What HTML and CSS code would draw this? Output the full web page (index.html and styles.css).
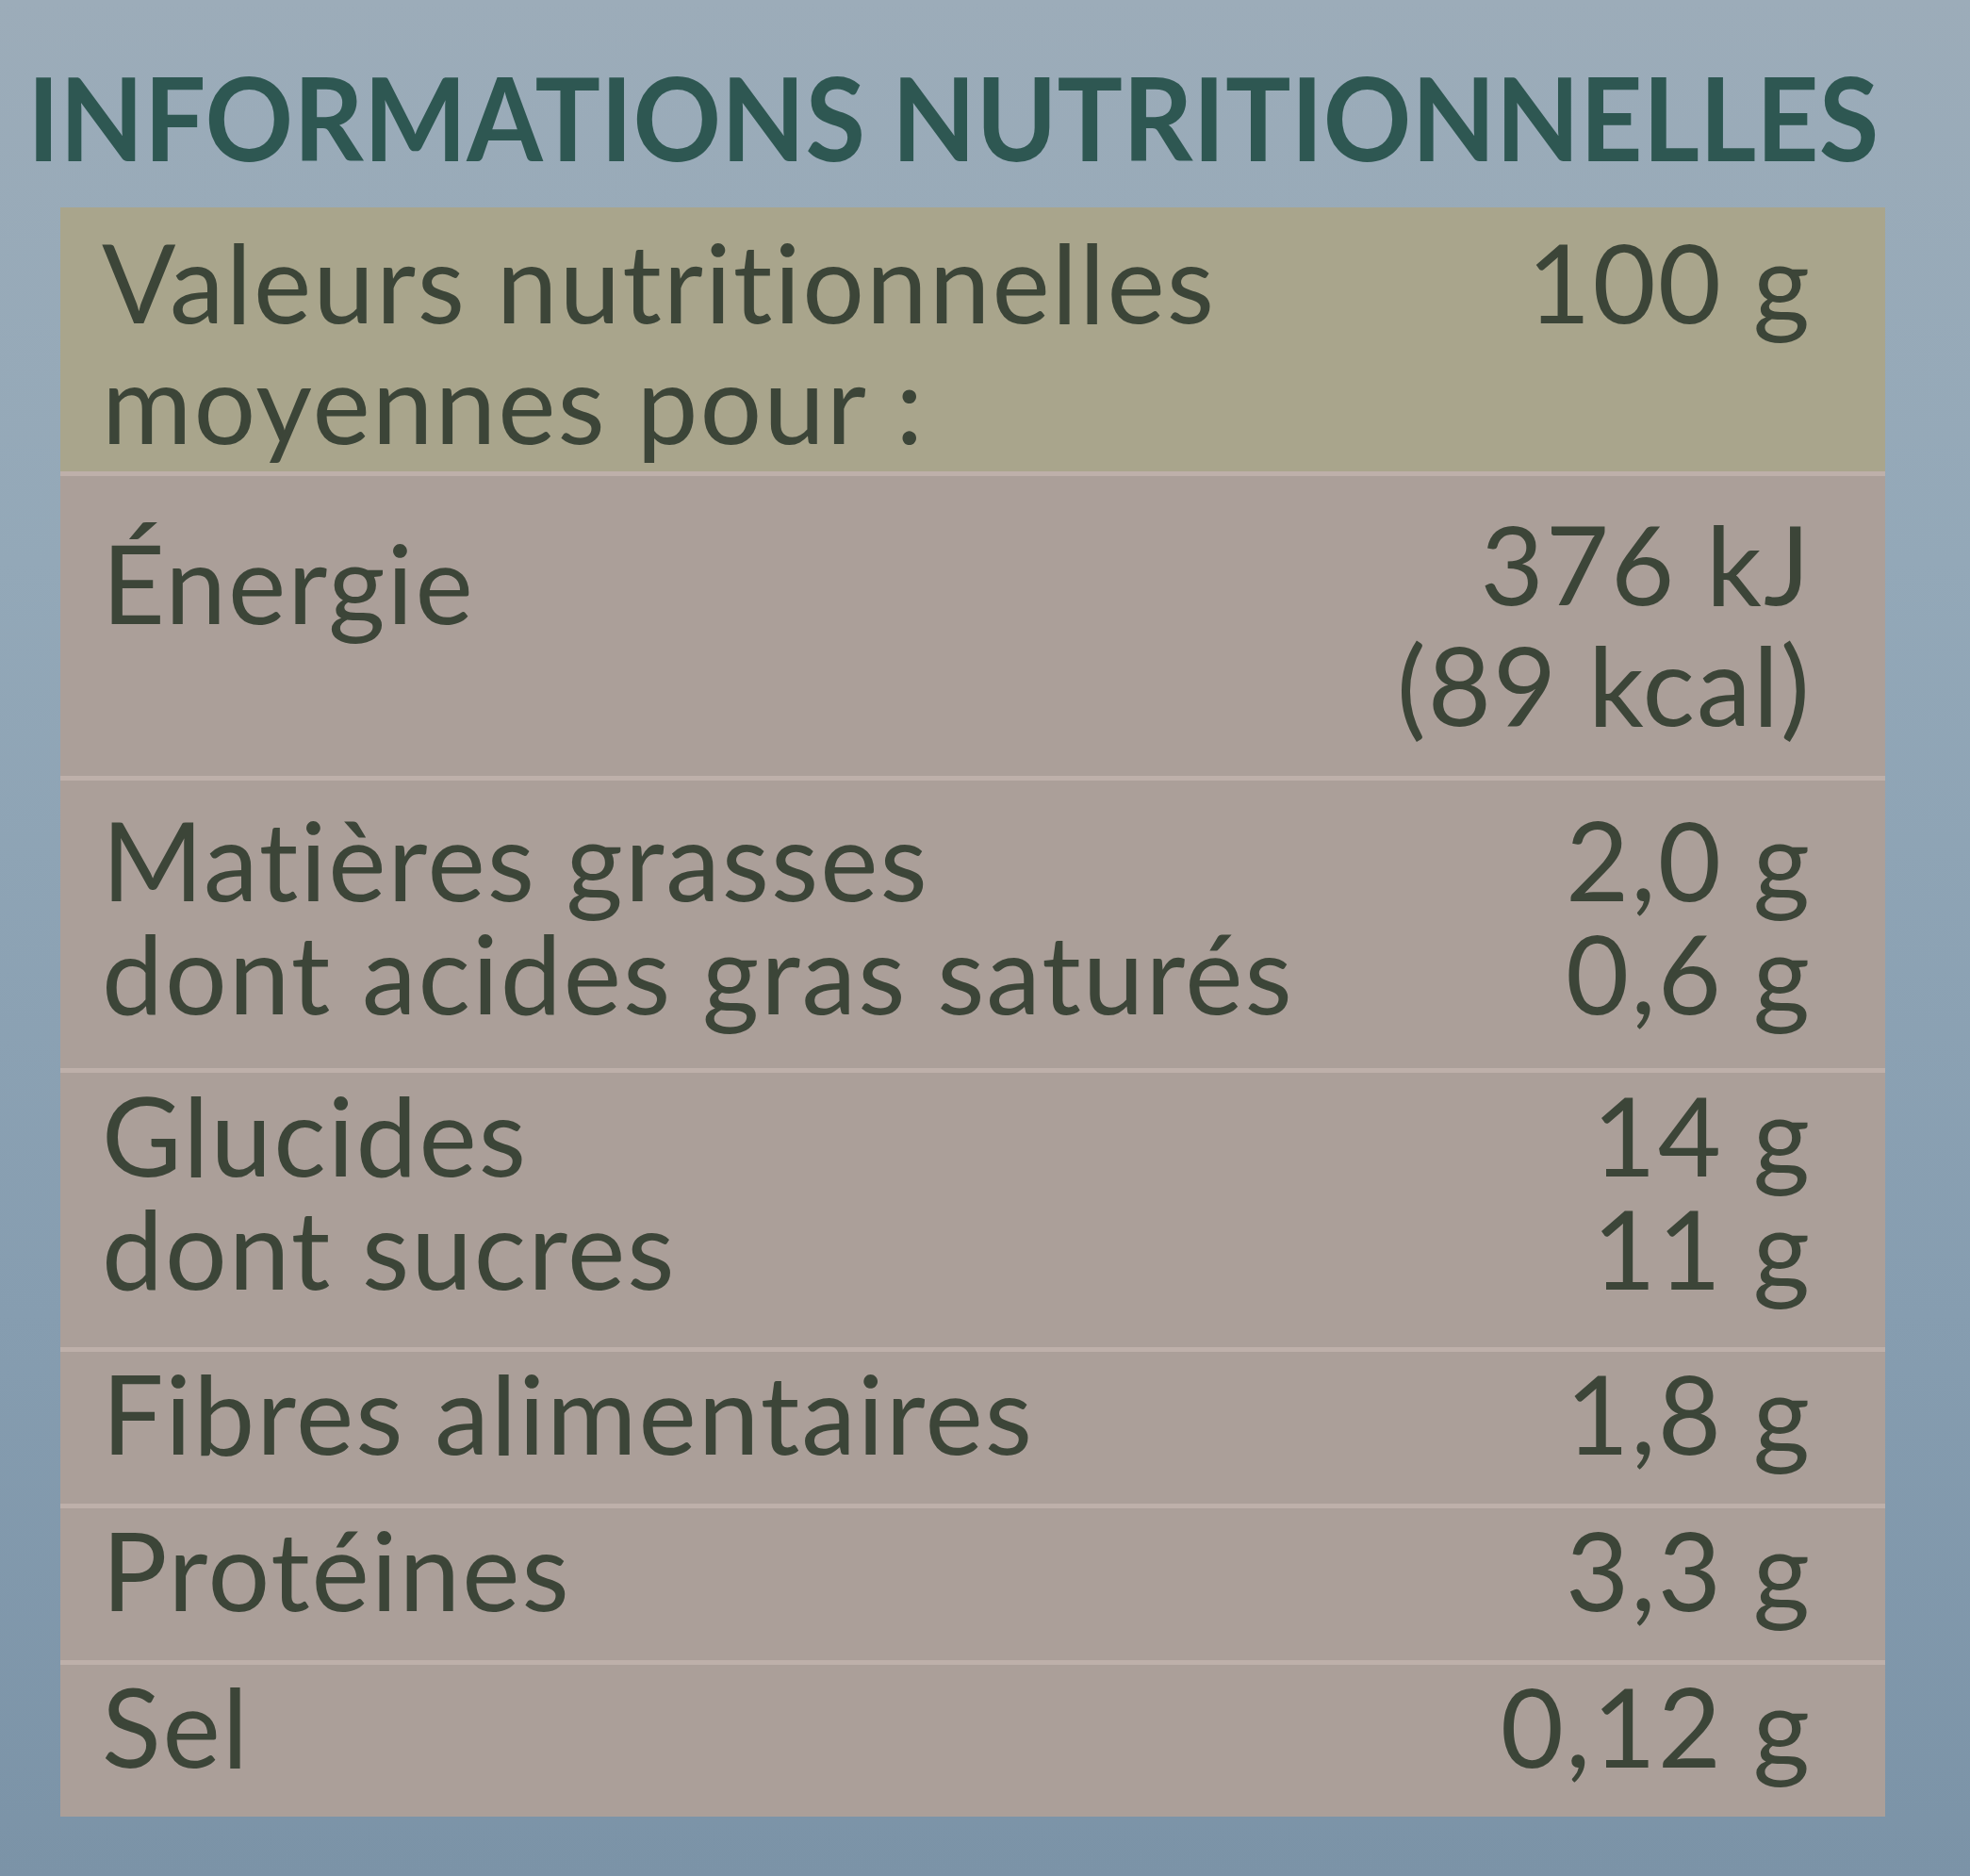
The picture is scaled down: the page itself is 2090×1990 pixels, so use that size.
FILE: index.html
```html
<!DOCTYPE html>
<html lang="fr">
<head>
<meta charset="utf-8">
<title>Informations nutritionnelles</title>
<link rel="stylesheet" href="styles.css">
</head>
<body>
<main class="page">
  <h1 class="title"><span class="title-text">INFORMATIONS NUTRITIONNELLES</span></h1>
  <section class="table">
    <div class="row row-head">
      <div class="label">Valeurs nutritionnelles<br>moyennes pour :</div>
      <div class="value">100 g</div>
    </div>
    <div class="row row-energy">
      <div class="label">Énergie</div>
      <div class="value">376 kJ<br>(89 kcal)</div>
    </div>
    <div class="row row-fat">
      <div class="label">Matières grasses<br>dont acides gras saturés</div>
      <div class="value">2,0 g<br>0,6 g</div>
    </div>
    <div class="row row-carb">
      <div class="label">Glucides<br>dont sucres</div>
      <div class="value">14 g<br>11 g</div>
    </div>
    <div class="row row-single">
      <div class="label">Fibres alimentaires</div>
      <div class="value">1,8 g</div>
    </div>
    <div class="row row-single">
      <div class="label">Protéines</div>
      <div class="value">3,3 g</div>
    </div>
    <div class="row row-single row-last">
      <div class="label">Sel</div>
      <div class="value">0,12 g</div>
    </div>
  </section>
</main>
</body>
</html>
```
FILE: styles.css
```css
html, body {
  margin: 0;
  padding: 0;
}
body {
  width: 2090px;
  height: 1990px;
  overflow: hidden;
  background: linear-gradient(180deg, #9cacb9 0%, #93a8b8 30%, #869db0 70%, #7b93a7 100%);
  font-family: "Lato", "Open Sans", sans-serif;
  font-variant-ligatures: none;
  font-feature-settings: "liga" 0, "clig" 0;
}
.page {
  display: flex;
  flex-direction: column;
  padding-top: 63px;
}
.title {
  margin: 0;
  padding-left: 29px;
  font-family: "Lato", sans-serif;
  font-weight: 700;
  font-size: 122px;
  line-height: 122px;
  color: #2e5752;
  white-space: nowrap;
}
.title-text {
  display: inline-block;
  transform-origin: left center;
  transform: scaleX(0.95);
}
.table {
  margin: 35px 90px 0 64px;
  background: #ab9f99;
  color: #3c4538;
  font-size: 116px;
  line-height: 120px;
  letter-spacing: 2px;
}
.row {
  display: flex;
  justify-content: space-between;
  align-items: flex-start;
  padding: 4px 78px 37px 44px;
  border-top: 5px solid #beb0aa;
}
.value {
  text-align: right;
  white-space: nowrap;
}
.label {
  white-space: nowrap;
}
.row-head {
  background: #a9a58c;
  border-top: 0;
  line-height: 128px;
  padding-top: 15px;
  padding-bottom: 9px;
}
.row-energy {
  line-height: 128px;
  padding-top: 29px;
  padding-bottom: 33px;
}
.row-energy .label {
  padding-top: 20px;
}
.row-fat {
  padding-top: 24px;
  padding-bottom: 41px;
}
.row-carb {
  padding-top: 6px;
  padding-bottom: 45px;
}
.row-single {
  padding-top: 5px;
  padding-bottom: 36px;
}
```
